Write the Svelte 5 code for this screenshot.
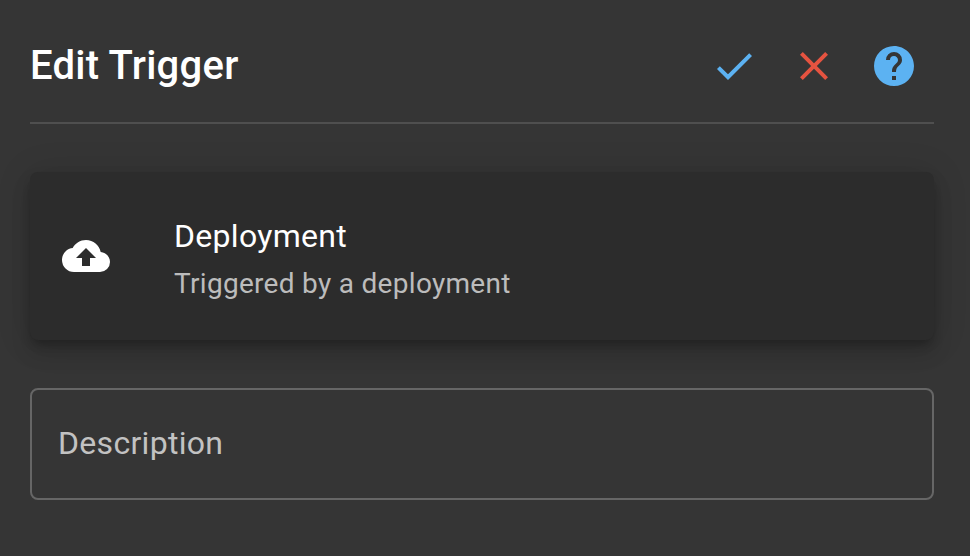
<script>
  const actions = [
    { label: 'Save', tone: 'blue', path: 'M21,7L9,19L3.5,13.5L4.91,12.09L9,16.17L19.59,5.59L21,7Z' },
    { label: 'Cancel', tone: 'red', path: 'M19,6.41L17.59,5L12,10.59L6.41,5L5,6.41L10.59,12L5,17.59L6.41,19L12,13.41L17.59,19L19,17.59L13.41,12L19,6.41Z' },
    { label: 'Help', tone: 'blue', path: 'M15.07,11.25L14.17,12.17C13.45,12.89 13,13.5 13,15H11V14.5C11,13.39 11.45,12.39 12.17,11.67L13.41,10.41C13.78,10.05 14,9.55 14,9C14,7.89 13.1,7 12,7A2,2 0 0,0 10,9H8A4,4 0 0,1 12,5A4,4 0 0,1 16,9C16,9.88 15.64,10.67 15.07,11.25M13,19H11V17H13M12,2A10,10 0 0,0 2,12A10,10 0 0,0 12,22A10,10 0 0,0 22,12C22,6.47 17.5,2 12,2Z' }
  ];
</script>

<main>
  <header>
    <h1>Edit Trigger</h1>
    <div class="actions">
      {#each actions as action}
        <button class={action.tone} aria-label={action.label}>
          <svg viewBox="0 0 24 24"><path d={action.path} /></svg>
        </button>
      {/each}
    </div>
  </header>

  <section class="card">
    <svg viewBox="0 0 24 24"><path d="M14,13V17H10V13H7L12,8L17,13M19.35,10.03C18.67,6.59 15.64,4 12,4C9.11,4 6.6,5.64 5.35,8.03C2.34,8.36 0,10.9 0,14A6,6 0 0,0 6,20H19A5,5 0 0,0 24,15C24,12.36 21.95,10.22 19.35,10.03Z" /></svg>
    <div class="summary">
      <div class="name">Deployment</div>
      <div class="detail">Triggered by a deployment</div>
    </div>
  </section>

  <div class="field">Description</div>
</main>

<style>
  :global(body) {
    background: #353535;
  }

  main {
    box-sizing: border-box;
    height: 556px;
    padding: 10px 36px 0 30px;
    background: #353535;
    color: #fff;
    font-family: Roboto, sans-serif;
    overflow: hidden;
  }

  header {
    box-sizing: border-box;
    display: flex;
    align-items: center;
    justify-content: space-between;
    height: 114px;
    padding-right: 16px;
    border-bottom: 2px solid #4f4f4f;
  }

  h1 {
    margin: 0;
    font-size: 40px;
    font-weight: 500;
    line-height: 64px;
    letter-spacing: 0.25px;
  }

  .actions {
    display: flex;
    gap: 32px;
  }

  button {
    display: block;
    width: 48px;
    height: 48px;
    padding: 0;
    border: 0;
    background: none;
  }

  svg {
    display: block;
    width: 48px;
    height: 48px;
    fill: currentColor;
  }

  .blue {
    color: #5cb2f2;
  }

  .red {
    color: #e55340;
  }

  .card {
    box-sizing: border-box;
    display: flex;
    align-items: center;
    gap: 64px;
    height: 168px;
    margin-top: 48px;
    padding: 0 32px;
    border-radius: 8px;
    background: #2c2c2c;
    box-shadow:
      0 6px 10px -2px rgba(0, 0, 0, 0.2),
      0 12px 20px 0 rgba(0, 0, 0, 0.14),
      0 2px 36px 0 rgba(0, 0, 0, 0.12);
  }

  .summary {
    padding-top: 4px;
  }

  .name {
    font-size: 32px;
    line-height: 48px;
    letter-spacing: 0.3px;
  }

  .detail {
    color: #bcbcbc;
    font-size: 28px;
    line-height: 40px;
    letter-spacing: 0.3px;
    margin-top: 4px;
  }

  .field {
    box-sizing: border-box;
    display: flex;
    align-items: center;
    height: 112px;
    margin-top: 48px;
    padding: 0 26px 2px;
    border: 2px solid #666;
    border-radius: 8px;
    color: #c2c2c2;
    font-size: 32px;
    letter-spacing: 0.3px;
  }
</style>
